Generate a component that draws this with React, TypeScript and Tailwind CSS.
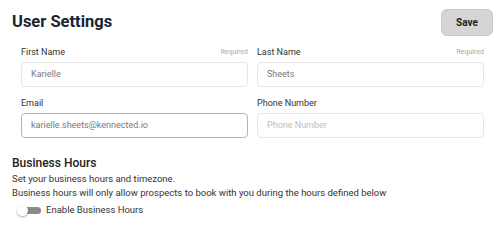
import React from 'react';

type Field = {
  label: string;
  value?: string;
  placeholder?: string;
  required?: boolean;
  focused?: boolean;
};

const fields: Field[] = [
  { label: 'First Name', value: 'Karielle', required: true },
  { label: 'Last Name', value: 'Sheets', required: true },
  { label: 'Email', value: 'karielle.sheets@kennected.io', focused: true },
  { label: 'Phone Number', placeholder: 'Phone Number' },
];

function FormField({ field }: { field: Field }) {
  return (
    <div className="flex flex-col">
      <div className="flex items-center justify-between h-[12px] leading-[12px]">
        <span className="text-[9px] text-[#333333]">{field.label}</span>
        {field.required && <span className="text-[7px] text-[#a8a8a8]">Required</span>}
      </div>
      <div
        className={`mt-[4px] h-[25px] rounded-[4px] border flex items-center px-[9px] text-[9px] ${
          field.focused ? 'border-[#b4b4b4]' : 'border-[#e6e6e6]'
        } ${field.value ? 'text-[#7a7a7a]' : 'text-[#bdbdbd]'}`}
      >
        {field.value ?? field.placeholder}
      </div>
    </div>
  );
}

export default function App() {
  return (
    <div className="w-[500px] h-[238px] bg-white overflow-hidden font-['Roboto',sans-serif]">
      <div className="flex items-start justify-between pl-[12px] pr-[7px] pt-[9px]">
        <h1 className="mt-[1px] text-[16.5px] leading-[24px] font-bold text-[#1b2333]">User Settings</h1>
        <button className="w-[52px] h-[27px] rounded-[6px] bg-[#d5d5d5] border border-[#cacaca] text-[10px] font-bold text-[#222]">
          Save
        </button>
      </div>

      <div className="ml-[21px] w-[463px] mt-[10px] grid grid-cols-2 gap-x-[9px] gap-y-[10px]">
        {fields.map((f) => (
          <FormField key={f.label} field={f} />
        ))}
      </div>

      <div className="pl-[12px] mt-[17px]">
        <h2 className="text-[12px] leading-[16px] font-medium text-[#222]">Business Hours</h2>
        <p className="mt-[1px] text-[9.5px] leading-[14px] text-[#333]">Set your business hours and timezone.</p>
        <p className="text-[9.5px] leading-[14px] text-[#333]">
          Business hours will only allow prospects to book with you during the hours defined below
        </p>
        <div className="mt-[3px] flex items-center h-[14px]">
          <div className="relative ml-[5px] w-[24px] h-[14px] flex items-center">
            <div className="ml-[2px] w-[22px] h-[7px] rounded-full bg-[#8a8a8a]" />
            <div className="absolute left-0 top-[1.5px] w-[11px] h-[11px] rounded-full bg-white shadow-[0_1px_2px_rgba(0,0,0,0.35)]" />
          </div>
          <span className="ml-[5px] text-[9.5px] text-[#333]">Enable Business Hours</span>
        </div>
      </div>
    </div>
  );
}
